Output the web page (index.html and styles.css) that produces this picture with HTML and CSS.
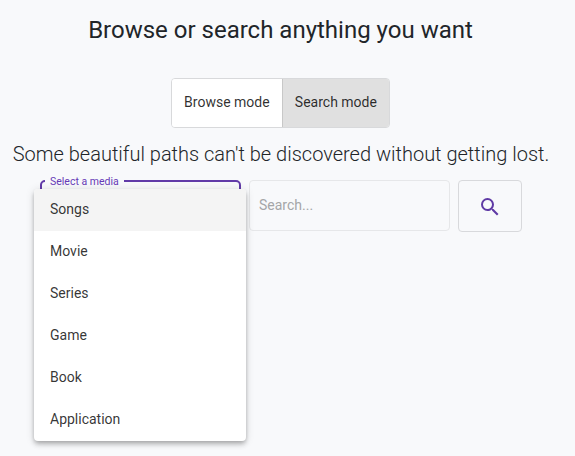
FILE: index.html
```html
<!DOCTYPE html>
<html lang="en">
<head>
<meta charset="utf-8">
<title>Browse or search</title>
<link rel="stylesheet" href="styles.css">
</head>
<body>
<main class="page">
  <h1 class="title">Browse or search anything you want</h1>
  <div class="toggle-group">
    <button class="toggle">Browse mode</button>
    <button class="toggle toggle-checked">Search mode</button>
  </div>
  <p class="subtitle">Some beautiful paths can't be discovered without getting lost.</p>
  <form class="search-row">
    <div class="select-field">
      <fieldset class="outline"><legend class="label">Select a media</legend></fieldset>
      <ul class="menu">
        <li class="option option-active">Songs</li>
        <li class="option">Movie</li>
        <li class="option">Series</li>
        <li class="option">Game</li>
        <li class="option">Book</li>
        <li class="option">Application</li>
      </ul>
    </div>
    <input class="search-input" type="text" placeholder="Search...">
    <button class="search-button" type="button" aria-label="Search">
      <svg class="icon" viewBox="0 0 24 24"><path d="M15.5 14h-.79l-.28-.27A6.471 6.471 0 0 0 16 9.5 6.5 6.5 0 1 0 9.5 16c1.61 0 3.09-.59 4.23-1.57l.27.28v.79l5 4.99L20.49 19l-4.99-5zm-6 0C7.01 14 5 11.99 5 9.5S7.01 5 9.5 5 14 7.01 14 9.5 11.99 14 9.5 14z"/></svg>
    </button>
  </form>
</main>
</body>
</html>
```
FILE: styles.css
```css
* { box-sizing: border-box; }
body {
  margin: 0;
  height: 456px;
  overflow: hidden;
  background: #f8f9fb;
  color: #212529;
  font-family: Roboto, "Liberation Sans", sans-serif;
}
button { font-family: inherit; }
.page { width: 561px; }
.title {
  margin: 0;
  padding-top: 14px;
  font-size: 24px;
  font-weight: 400;
  line-height: 32px;
  text-align: center;
}
.toggle-group {
  display: flex;
  width: 219px;
  height: 50px;
  margin: 32px auto 0 171px;
  border: 1px solid #d8d9db;
  border-radius: 4px;
  overflow: hidden;
}
.toggle {
  flex: 1 1 auto;
  padding: 0 12px 2px;
  border: 0;
  background: #fff;
  color: rgba(0, 0, 0, .82);
  font-size: 14px;
  white-space: nowrap;
}
.toggle-checked { background: #e0e0e0; border-left: 1px solid #c8c8c8; }
.subtitle {
  margin: 11px 0 0;
  padding-left: 1px;
  font-size: 20px;
  font-weight: 300;
  line-height: 30px;
  text-align: center;
  white-space: nowrap;
}
.search-row {
  display: flex;
  margin: 11px 0 0 40px;
  align-items: flex-start;
}
.select-field { position: relative; width: 201px; height: 51px; }
.outline {
  height: 58px;
  margin: -6px 0 0;
  padding: 0 3px;
  border: 2px solid #613aa8;
  border-radius: 5px;
}
.label {
  padding: 2px 5px 0;
  color: #673ab7;
  font-size: 10.5px;
  line-height: 12px;
}
.menu {
  position: absolute;
  top: 9px;
  left: -6px;
  width: 212px;
  margin: 0;
  padding: 0;
  list-style: none;
  background: #fff;
  border-radius: 4px;
  box-shadow: 0 2px 4px -1px rgba(0,0,0,.2), 0 4px 5px rgba(0,0,0,.14), 0 1px 10px rgba(0,0,0,.12);
  overflow: hidden;
}
.option {
  height: 42px;
  padding: 0 16px;
  color: rgba(0, 0, 0, .8);
  font-size: 14px;
  line-height: 40px;
}
.option-active { background: #f4f4f4; }
.search-input {
  width: 201px;
  height: 51px;
  margin-left: 8px;
  padding: 0 9px 2px;
  border: 1px solid #e6e7e9;
  border-radius: 4px;
  background: transparent;
  font: 400 14px Roboto, sans-serif;
}
.search-input::placeholder { color: #a5a6a8; opacity: 1; }
.search-button {
  display: grid;
  place-items: center;
  width: 64px;
  height: 52px;
  margin-left: 8px;
  padding: 2px 0 0;
  border: 1px solid #d8d9dc;
  border-radius: 4px;
  background: transparent;
}
.icon { width: 24px; height: 24px; fill: #5f3aa5; }
```
